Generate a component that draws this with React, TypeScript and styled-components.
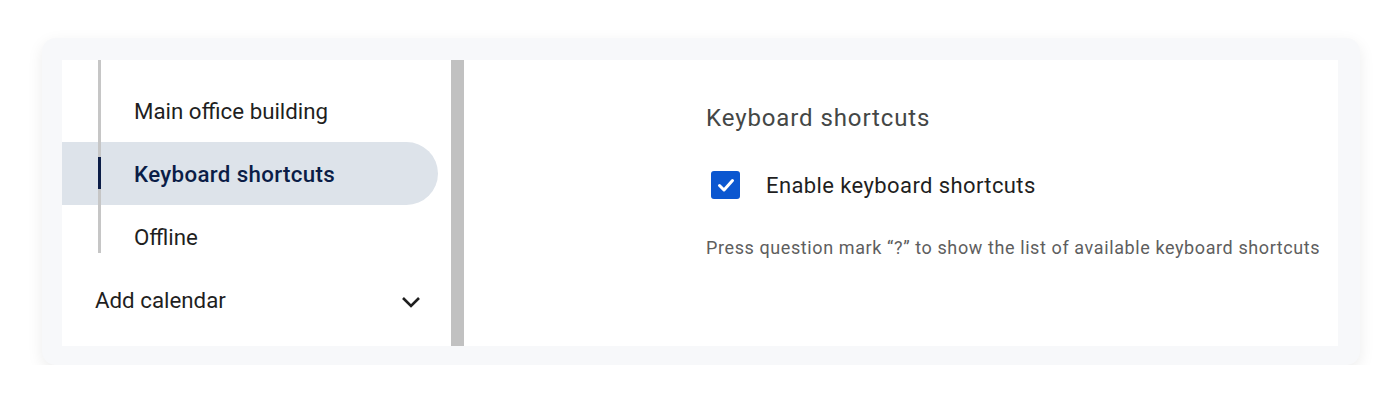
import React, { useState } from "react";
import styled, { createGlobalStyle } from "styled-components";

const GlobalStyle = createGlobalStyle`
  body {
    margin: 0;
    background: #ffffff;
    font-family: Roboto, "Liberation Sans", Arial, sans-serif;
  }
`;

interface NavItem {
  id: string;
  label: string;
}

const subItems: NavItem[] = [
  { id: "office", label: "Main office building" },
  { id: "shortcuts", label: "Keyboard shortcuts" },
  { id: "offline", label: "Offline" },
];

function App() {
  const [active, setActive] = useState<string>("shortcuts");
  const [enabled, setEnabled] = useState<boolean>(true);

  return (
    <>
      <GlobalStyle />
      <Page>
        <Card>
          <Panel>
            <Sidebar>
              <SubList>
                {subItems.map((item) => (
                  <SubItem
                    key={item.id}
                    $active={item.id === active}
                    onClick={() => setActive(item.id)}
                  >
                    {item.label}
                  </SubItem>
                ))}
              </SubList>
              <SectionRow>
                <span>Add calendar</span>
                <svg width="20" height="12" viewBox="0 0 20 12">
                  <polyline
                    points="2,2 10,10 18,2"
                    fill="none"
                    stroke="#1f1f1f"
                    strokeWidth="2.6"
                  />
                </svg>
              </SectionRow>
            </Sidebar>
            <ScrollTrack />
            <Content>
              <Heading>Keyboard shortcuts</Heading>
              <CheckRow onClick={() => setEnabled(!enabled)}>
                <CheckBox $checked={enabled}>
                  {enabled && (
                    <svg width="28" height="28" viewBox="0 0 28 28">
                      <polyline
                        points="7.5,14.5 12,19 20.5,9.5"
                        fill="none"
                        stroke="#ffffff"
                        strokeWidth="3"
                        strokeLinecap="round"
                        strokeLinejoin="round"
                      />
                    </svg>
                  )}
                </CheckBox>
                <CheckLabel>Enable keyboard shortcuts</CheckLabel>
              </CheckRow>
              <Hint>
                Press question mark “?” to show the list of available keyboard
                shortcuts
              </Hint>
            </Content>
          </Panel>
        </Card>
      </Page>
    </>
  );
}

export default App;

const Page = styled.div`
  padding: 38px 40px 0 42px;
`;

const Card = styled.div`
  width: 1318px;
  height: 327px;
  box-sizing: border-box;
  padding: 22px 22px 19px 20px;
  background: #f7f8fa;
  border-radius: 14px;
  box-shadow: 0 5px 16px rgba(0, 0, 0, 0.08);
`;

const Panel = styled.div`
  display: flex;
  height: 100%;
  background: #ffffff;
  overflow: hidden;
`;

const Sidebar = styled.div`
  width: 389px;
  display: flex;
  flex-direction: column;
`;

const SubList = styled.div`
  position: relative;
  padding-top: 19px;

  &::after {
    content: "";
    position: absolute;
    left: 36px;
    top: 0;
    width: 3px;
    height: 193px;
    background: #c6c6c6;
    z-index: 1;
  }
`;

const SubItem = styled.div<{ $active: boolean }>`
  position: relative;
  width: 376px;
  height: 63px;
  box-sizing: border-box;
  padding-left: 72px;
  display: flex;
  align-items: center;
  font-size: 22.3px;
  letter-spacing: ${(p) => (p.$active ? "0.35px" : "0")};
  font-weight: ${(p) => (p.$active ? 500 : 400)};
  color: ${(p) => (p.$active ? "#0b1d47" : "#1f1f1f")};
  background: ${(p) => (p.$active ? "#dde3ea" : "transparent")};
  border-radius: 0 32px 32px 0;
  cursor: pointer;

  &::before {
    content: "";
    display: ${(p) => (p.$active ? "block" : "none")};
    position: absolute;
    left: 36px;
    top: 15px;
    width: 3px;
    height: 32px;
    background: #0b1d47;
    z-index: 2;
  }
`;

const SectionRow = styled.div`
  height: 63px;
  padding: 0 30px 0 33px;
  display: flex;
  align-items: center;
  justify-content: space-between;
  font-size: 22.3px;
  color: #1f1f1f;

  svg {
    margin-top: 4px;
  }
`;

const ScrollTrack = styled.div`
  width: 13px;
  background: #c1c1c1;
`;

const Content = styled.div`
  flex: 1;
  display: flex;
  flex-direction: column;
  padding: 42px 0 0 242px;
`;

const Heading = styled.div`
  font-size: 24px;
  line-height: 32px;
  letter-spacing: 0.9px;
  color: #444746;
`;

const CheckRow = styled.div`
  display: flex;
  align-items: center;
  height: 40px;
  margin-top: 31px;
  padding-left: 5px;
  cursor: pointer;
`;

const CheckBox = styled.div<{ $checked: boolean }>`
  width: 29px;
  height: 28px;
  box-sizing: border-box;
  border-radius: 3px;
  background: ${(p) => (p.$checked ? "#0b57d0" : "#ffffff")};
  border: ${(p) => (p.$checked ? "none" : "2px solid #444746")};
  display: flex;
  align-items: center;
  justify-content: center;
`;

const CheckLabel = styled.span`
  margin-left: 26px;
  font-size: 22px;
  letter-spacing: 0.4px;
  color: #1f1f1f;
`;

const Hint = styled.div`
  margin-top: 31px;
  font-size: 18px;
  line-height: 24px;
  letter-spacing: 0.6px;
  color: #5e5e5e;
`;
